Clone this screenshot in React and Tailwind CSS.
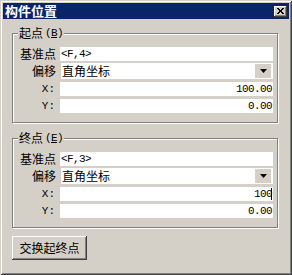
const cjk = { fontFamily: '"Noto Sans CJK SC", "Noto Sans", sans-serif' };
const mono = { fontFamily: '"Liberation Mono", "Noto Sans CJK SC", monospace' };

const Field = ({ children, align = "left", caret = false }) => (
  <div
    className={`relative flex-1 h-[14px] bg-white flex items-center text-[11px] leading-[14px] tracking-[-0.6px] text-black overflow-hidden ${
      align === "right" ? "justify-end pr-[1px]" : "pl-[1px]"
    }`}
    style={mono}
  >
    {children}
    {caret && <span className="absolute right-[1px] top-[1px] w-[1px] h-[12px] bg-black" />}
  </div>
);

const Combo = ({ value }) => (
  <div className="flex-1 h-[16px] ml-[1px] bg-white flex items-center justify-between pl-[1px] pr-[2px]">
    <span className="text-[12px] leading-[14px] text-black" style={cjk}>
      {value}
    </span>
    <div className="w-[16px] h-[14px] bg-[#d4d0c8] flex items-center justify-center">
      <svg width="7" height="4" viewBox="0 0 7 4">
        <path d="M0 0h7L3.5 4z" fill="#000" />
      </svg>
    </div>
  </div>
);

const Row = ({ label, labelMono, children, className = "" }) => (
  <div className={`flex items-center ${className}`}>
    <span
      className={`w-[43px] text-right text-black ${labelMono ? "text-[11px] pr-[1px]" : "text-[12px]"} leading-[14px]`}
      style={labelMono ? mono : cjk}
    >
      {label}
    </span>
    <div className="ml-[4px] flex-1 flex">{children}</div>
  </div>
);

const Group = ({ title, hot, base, x, xCaret, className = "" }) => (
  <div
    className={`relative ml-[9px] w-[266px] border border-[#808080] shadow-[inset_1px_1px_#fff,1px_1px_#fff] pt-[13px] pb-[9px] pr-[4px] ${className}`}
  >
    <span
      className="absolute left-[5px] top-[-8px] px-[1px] bg-[#d4d0c8] text-[12px] leading-[14px] text-black flex items-center"
      style={cjk}
    >
      {title}
      <span className="ml-[2px] text-[11px] tracking-[-0.6px]" style={mono}>
        (<u>{hot}</u>)
      </span>
    </span>
    <Row label="基准点">
      <Field>{base}</Field>
    </Row>
    <Row label="偏移" className="mt-[2px]">
      <Combo value="直角坐标" />
    </Row>
    <Row label="X:" labelMono className="mt-[3px]">
      <Field align="right" caret={xCaret}>
        {x}
      </Field>
    </Row>
    <Row label="Y:" labelMono className="mt-[3px]">
      <Field align="right">0.00</Field>
    </Row>
  </div>
);

export default function App() {
  return (
    <div className="w-[292px] h-[275px] bg-[#d4d0c8] p-[3px] shadow-[inset_1px_1px_#d4d0c8,inset_-1px_-1px_#404040,inset_2px_2px_#fff,inset_-2px_-2px_#808080]">
      <div className="h-[16px] bg-[#0a246a] flex items-center justify-between pl-[2px] pr-[2px]">
        <span className="text-[13px] font-bold leading-[16px] text-white" style={cjk}>
          构件位置
        </span>
        <div className="w-[13px] h-[11px] bg-[#d4d0c8] flex items-center justify-center shadow-[inset_-1px_-1px_#404040,inset_1px_1px_#fff,inset_-2px_-2px_#808080]">
          <svg width="7" height="6" viewBox="0 0 7 6">
            <path d="M0 0L6 6M1 0L7 6M6 0L0 6M7 0L1 6" stroke="#000" strokeWidth="1" />
          </svg>
        </div>
      </div>

      <Group title="起点" hot="B" base="<F,4>" x="100.00" className="mt-[14px]" />
      <Group title="终点" hot="E" base="<F,3>" x="100" xCaret className="mt-[15px]" />

      <button
        className="mt-[8px] ml-[9px] w-[75px] h-[24px] bg-[#d4d0c8] text-[12px] text-black shadow-[inset_-1px_-1px_#404040,inset_1px_1px_#fff,inset_-2px_-2px_#808080,inset_2px_2px_#d4d0c8]"
        style={cjk}
      >
        交换起终点
      </button>
    </div>
  );
}
